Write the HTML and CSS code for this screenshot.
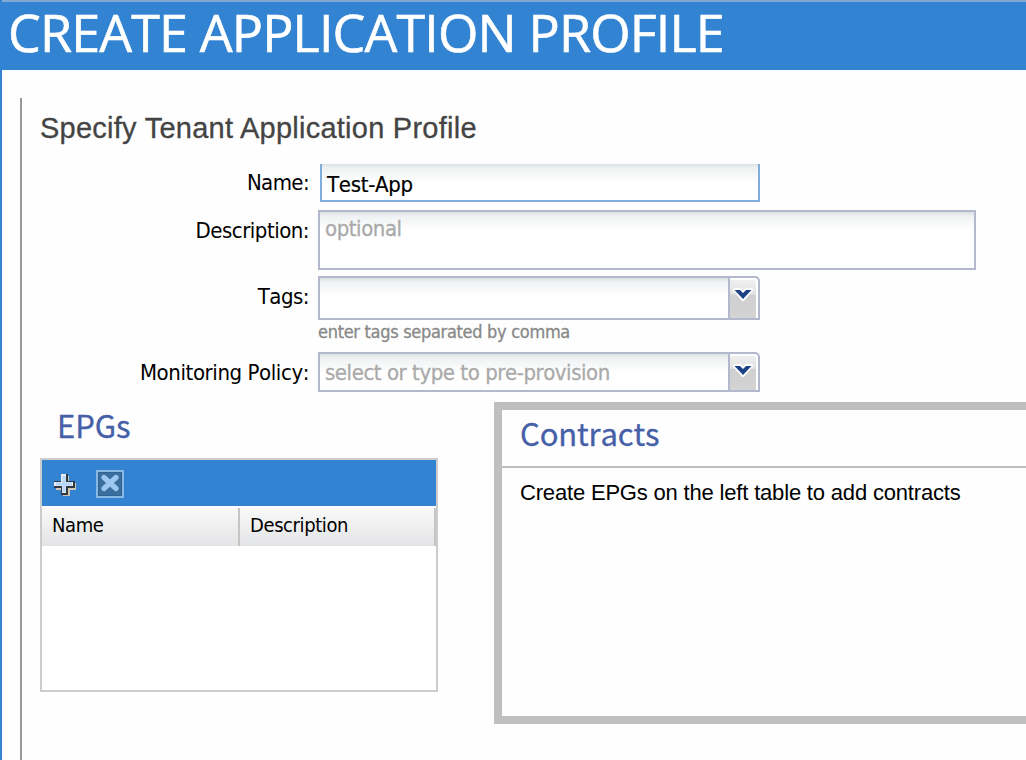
FILE: index.html
```html
<!DOCTYPE html>
<html lang="en">
<head>
<meta charset="utf-8">
<title>Create Application Profile</title>
<link rel="stylesheet" href="styles.css">
</head>
<body>
<div class="dialog">
  <header class="dialog-header"><h1>CREATE APPLICATION PROFILE</h1></header>
  <main class="step">
    <h2 class="step-title"><span>Specify Tenant Application Profile</span></h2>
    <div class="form">
      <div class="row row-name"><div class="label"><span>Name:</span></div><div class="field focused"><span class="t-name">Test-App</span></div></div>
      <div class="row row-desc"><div class="label"><span>Description:</span></div><div class="field"><span class="t-opt">optional</span></div></div>
      <div class="row row-tags"><div class="label"><span>Tags:</span></div>
        <div class="combo"><div class="field"></div><div class="trigger"><svg width="20" height="16" viewBox="0 0 20 16"><path class="halo" d="M2 3H7L10 6L13 3H18L10 12Z"/><path class="arrow" d="M1.500 3H7L10 6L13 3H18.500L10 12Z"/></svg></div></div></div>
      <div class="hint"><span>enter tags separated by comma</span></div>
      <div class="row row-policy"><div class="label"><span class="t-mon">Monitoring Policy:</span></div>
        <div class="combo"><div class="field"><span class="t-select">select or type to pre-provision</span></div><div class="trigger"><svg width="20" height="16" viewBox="0 0 20 16"><path class="halo" d="M2 3H7L10 6L13 3H18L10 12Z"/><path class="arrow" d="M1.500 3H7L10 6L13 3H18.500L10 12Z"/></svg></div></div></div>
    </div>
    <div class="panels">
      <section class="epgs">
        <h3><span>EPGs</span></h3>
        <div class="grid">
          <div class="toolbar">
            <svg class="add" width="26" height="26" viewBox="0 0 26 26"><path d="M11 4h6v7h7v7h-6v6h-7v-6H4v-4h7z" fill="#d0c7b7"/><path d="M9 2h7v7h7v7h-7v7H9v-7H2V9h7z" fill="#303842"/><path d="M9 2h5v8h7v4h-7v7h-4v-7H2v-4h7z" fill="#e9edf2"/><path d="M10.500 4h3v6.500H20v3h-6.500V20h-3v-6.500H4v-3h6.500z" fill="#b8d5fa"/></svg>
            <svg class="remove" width="28" height="28" viewBox="0 0 28 28"><rect x="1" y="1" width="26" height="26" fill="#3b6f9f" stroke="#88b9e5" stroke-width="2"/><rect x="2.500" y="2.500" width="23" height="23" fill="none" stroke="#306391"/><path d="M8 7.500L20 18.500M20 7.500L8 18.500" stroke="#9dc7ef" stroke-width="5.200" stroke-linecap="round"/></svg>
          </div>
          <div class="columns"><div class="col col-name"><span>Name</span></div><div class="col col-desc"><span>Description</span></div></div>
        </div>
      </section>
      <section class="contracts">
        <h3><span>Contracts</span></h3>
        <p><span>Create EPGs on the left table to add contracts</span></p>
      </section>
    </div>
  </main>
</div>
</body>
</html>
```
FILE: styles.css
```css
* { box-sizing: border-box; }
body { margin: 0; overflow: hidden; background: #fff; }
span { white-space: nowrap; }
h1, h2, h3, p { margin: 0; font-weight: 400; }
.dialog { width: 1026px; height: 760px; border-left: 2px solid #3284d3; overflow: hidden; background: #fefefe; font-family: "DejaVu Sans Condensed", "DejaVu Sans", sans-serif; font-stretch: condensed; font-size: 22px; font-kerning: none; color: #000; }
.dialog-header { height: 70px; margin-left: -2px; padding-left: 8px; border-top: 2px solid #7fa8d3; background: #3284d3; }
.dialog-header h1 { font: 400 52px/60px "Open Sans", sans-serif; font-kerning: normal; letter-spacing: -.85px; color: #fff; white-space: nowrap; -webkit-text-stroke: .6px #fff; }
.step { margin: 28px 0 0 18px; height: 662px; border-left: 2px solid #999; padding-left: 18px; }
.step-title { height: 66px; padding-top: 12px; font: 400 29px/36px "Liberation Sans", Arial, sans-serif; font-kerning: normal; letter-spacing: .25px; color: #444; -webkit-text-stroke: .3px #444; }
.form { height: 238px; }
.row { display: grid; grid-template-columns: 269px auto; column-gap: 9px; justify-content: start; }
.label { text-align: right; line-height: 38px; letter-spacing: -.5px; }
.field { border: 2px solid #b4b8cc; background: linear-gradient(#d9dfe3 0, #eef1f2 4px, #fff 18px); padding-left: 5px; color: #aaa; line-height: 34px; letter-spacing: -.45px; -webkit-text-stroke: .3px #aaa; }
.row-name { height: 46px; }
.row-name .label { letter-spacing: -.6px; }
.row-name .field { width: 440px; height: 38px; margin-left: 2px; border-color: #7faeda; border-top: 0; color: #000; line-height: 42px; letter-spacing: -.3px; -webkit-text-stroke: .2px #000; }
.row-desc { height: 66px; }
.row-desc .label { line-height: 42px; }
.row-desc .field { width: 658px; height: 60px; }
.row-tags { height: 44px; }
.row-tags .label { line-height: 42px; }
.combo { display: flex; width: 442px; }
.combo .field { width: 412px; }
.trigger { width: 30px; border: 2px solid #b4b8cc; border-left: 0; border-top-right-radius: 5px; background: linear-gradient(#f1f1f1, #e2e2e2 40%, #d0d0d0 43%, #d3d3d3); box-shadow: inset -2px 2px #fff; padding: 9px 0 0 3px; }
.trigger svg { display: block; }
.halo { fill: #fff; stroke: #fff; stroke-width: 4; stroke-linejoin: round; }
.arrow { fill: #1c4185; }
.hint { height: 32px; margin-left: 278px; font-size: 18px; line-height: 24px; color: #888; letter-spacing: -.3px; -webkit-text-stroke: .3px #888; }
.row-policy { height: 40px; }
.row-policy .label { height: 40px; line-height: 42px; letter-spacing: -.41px; }
.row-policy .combo { height: 40px; }
.row-policy .field { line-height: 38px; }
.panels { display: flex; }
.epgs { flex: none; width: 398px; margin-right: 56px; }
h3 { font-family: "Noto Sans CJK SC", sans-serif; font-size: 31px; line-height: 46px; color: #4660a8; -webkit-text-stroke: .3px #4660a8; }
.epgs h3 { height: 56px; padding-left: 17px; letter-spacing: -.1px; }
.grid { height: 234px; border: 2px solid #ccc; background: #fff; }
.toolbar { height: 46px; display: flex; background: #3284d3; padding: 10px 0 0 10px; }
.add { margin-top: 2px; }
.remove { margin-left: 18px; }
.columns { display: grid; grid-template-columns: 198px 196px; height: 40px; border-top: 2px solid #fff; background: linear-gradient(#f9f9f9, #e3e4e6); background-clip: padding-box; }
.col { border-right: 2px solid #c5c5c5; padding-left: 10px; font-size: 20px; line-height: 34px; letter-spacing: -.4px; }
.contracts { flex: none; width: 540px; height: 322px; border: 8px solid #bfbfbf; }
.contracts h3 { height: 58px; padding-left: 18px; line-height: 46px; letter-spacing: -.15px; border-bottom: 2px solid #bfbfbf; }
.contracts p { padding-left: 18px; font: 400 22px/50px "Liberation Sans", Arial, sans-serif; font-kerning: normal; letter-spacing: -.18px; }
```
